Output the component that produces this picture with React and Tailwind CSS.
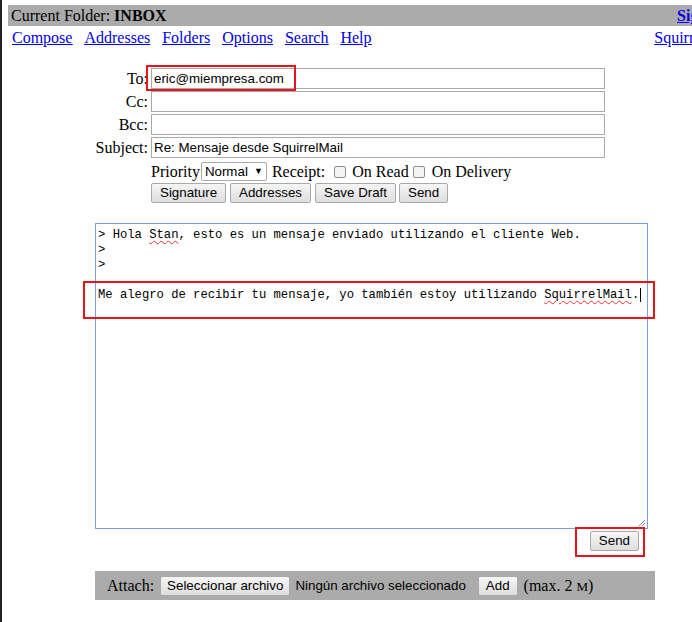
import React from 'react'

const btn =
  "h-[20px] border border-[#a9a9a9] rounded-[2px] bg-gradient-to-b from-[#f6f6f6] to-[#dedede] text-[13.33px] leading-none font-['Liberation_Sans'] text-black flex items-center"

function Field({ label, value }) {
  return (
    <div className="flex items-center h-[23px]">
      <div className="w-[56px] text-right text-[16px] leading-none">{label}</div>
      <div className="ml-[3px] w-[454px] h-[21px] border border-[#a9a9a9] bg-white flex items-center px-[2px] text-[13.33px] font-['Liberation_Sans']">
        {value}
      </div>
    </div>
  )
}

function Check() {
  return <span className="inline-block w-[12px] h-[12px] border border-[#8f8f8f] rounded-[2px] bg-[#f4f4f4]" />
}

export default function App() {
  return (
    <div className="relative w-[692px] h-[622px] overflow-hidden bg-white border-l-2 border-[#222] font-['Liberation_Serif',serif] text-black">
      <div className="w-[740px] pl-[6px] pt-[5px]">
        <div className="flex justify-between items-center h-[21px] bg-[#ababab] px-[3px] text-[16px]">
          <span>Current Folder: <b>INBOX</b></span>
          <a className="text-[#0000ee] underline font-bold mr-[1px]">Sign Out</a>
        </div>
        <div className="flex justify-between items-center h-[24px] px-[4px] text-[16px]">
          <div className="flex gap-[12px] text-[#0000ee] underline">
            <a>Compose</a>
            <a>Addresses</a>
            <a>Folders</a>
            <a>Options</a>
            <a>Search</a>
            <a>Help</a>
          </div>
          <a className="text-[#0000ee] underline mr-[2px]">SquirrelMail</a>
        </div>
      </div>

      <div className="pl-[90px] mt-[17px]">
        <div className="relative">
          <Field label="To:" value="eric@miempresa.com" />
          <div className="absolute left-[54px] top-[-2px] w-[150px] h-[26px] border-2 border-[#e8141b]" />
        </div>
        <Field label="Cc:" value="" />
        <Field label="Bcc:" value="" />
        <Field label="Subject:" value="Re: Mensaje desde SquirrelMail" />

        <div className="ml-[59px] flex items-center h-[23px] text-[16px] mt-[1px]">
          <span>Priority</span>
          <span className="ml-[1px] h-[19px] w-[66px] border border-[#a9a9a9] rounded-[2px] bg-white flex items-center justify-between px-[3px] text-[13.33px] font-['Liberation_Sans']">
            Normal <span className="text-[9px]">▼</span>
          </span>
          <span className="ml-[5px]">Receipt:</span>
          <span className="ml-[9px] flex items-center"><Check /></span>
          <span className="ml-[6px]">On Read</span>
          <span className="ml-[4px] flex items-center"><Check /></span>
          <span className="ml-[7px]">On Delivery</span>
        </div>
        <div className="ml-[59px] flex gap-[3px]">
          <span className={btn + ' px-[8px]'}>Signature</span>
          <span className={btn + ' px-[8px] ml-[1px]'}>Addresses</span>
          <span className={btn + ' px-[8px] ml-[1px]'}>Save Draft</span>
          <span className={btn + ' px-[8px]'}>Send</span>
        </div>
      </div>

      <div className="ml-[93px] mt-[20px] relative w-[553px] h-[306px] border border-[#7e9ee0] bg-white">
        <div className="pt-[4px] pl-[2px] font-['Liberation_Mono',monospace] text-[12.2px] leading-[15px] whitespace-pre">
          <div>{'> Hola '}<span className="underline decoration-wavy decoration-[#e33] decoration-1 underline-offset-2">Stan</span>{', esto es un mensaje enviado utilizando el cliente Web.'}</div>
          <div>{'>'}</div>
          <div>{'>'}</div>
          <div>{' '}</div>
          <div>
            {'Me alegro de recibir tu mensaje, yo también estoy utilizando '}
            <span className="underline decoration-wavy decoration-[#e33] decoration-1 underline-offset-2">SquirrelMail</span>
            {'.'}
            <span className="inline-block w-[1px] h-[14px] bg-black align-middle ml-[1px]" />
          </div>
        </div>
        <svg className="absolute right-[1px] bottom-[1px]" width="9" height="9" viewBox="0 0 9 9">
          <path d="M8 2 L2 8 M8 5 L5 8" stroke="#8a8a8a" strokeWidth="1" />
        </svg>
      </div>
      <div className="absolute left-[81px] top-[281px] w-[572px] h-[38px] border-2 border-[#e8141b]" />

      <div className="flex justify-end w-[637px] mt-[2px]">
        <span className={btn + ' px-[8px]'}>Send</span>
      </div>
      <div className="absolute left-[573px] top-[527px] w-[70px] h-[30px] border-2 border-[#e8141b]" />

      <div className="ml-[93px] mt-[20px] w-[560px] h-[29px] bg-[#ababab] flex items-center pl-[12px] text-[16px]">
        <span>Attach:</span>
        <span className={btn + ' px-[6px] ml-[6px]'}>Seleccionar archivo</span>
        <span className="ml-[5px] text-[13.33px] font-['Liberation_Sans']">Ningún archivo seleccionado</span>
        <span className={btn + ' px-[7px] ml-[12px]'}>Add</span>
        <span className="ml-[6px]">(max. 2 <span className="text-[13px]">M</span>)</span>
      </div>
    </div>
  )
}
